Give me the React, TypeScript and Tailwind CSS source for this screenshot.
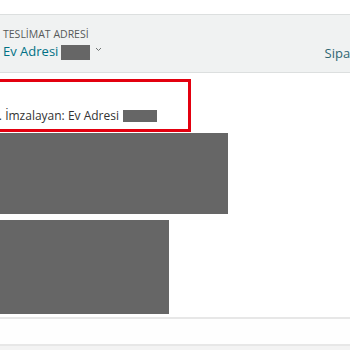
import React from "react";

export default function App() {
  return (
    <div className="w-[350px] h-[350px] overflow-hidden bg-white text-[#0f1111]" style={{ fontFamily: "'Open Sans', 'Noto Sans', sans-serif" }}>
      <div className="h-[14px]" />
      <div className="h-[59px] bg-[#f0f2f2] border-y border-[#dcdfdf] flex items-start justify-between overflow-hidden">
        <div className="pl-[3px] pt-[12px]">
          <div className="text-[10.5px] leading-[14px] text-[#565959]">TESLİMAT ADRESİ</div>
          <div className="flex items-center mt-[1px]">
            <span className="text-[13px] leading-[18px] text-[#007185]">Ev Adresi</span>
            <span className="ml-[3px] w-[29px] h-[15px] bg-[#666666] mt-[2px]" />
            <svg className="ml-[5px] mt-[-4px]" width="7" height="5" viewBox="0 0 7 5">
              <path d="M1 1 L3.5 3.5 L6 1" fill="none" stroke="#6f7373" strokeWidth="1" />
            </svg>
          </div>
        </div>
        <div className="pt-[29px] text-[13px] leading-[18px] text-[#2f6672] whitespace-nowrap translate-x-[15px]">Sipariş</div>
      </div>

      <div className="mt-[6px] -ml-[20px] w-[211px] h-[53px] border-[3px] border-[#e3000f] flex items-end justify-end pr-[31px] pb-[5px] overflow-hidden">
        <div className="flex items-center whitespace-nowrap">
          <span className="text-[12px] leading-[16px] text-[#333333]">Teslim edildi. İmzalayan: Ev Adresi</span>
          <span className="ml-[4px] w-[34px] h-[12px] bg-[#666666]" />
        </div>
      </div>

      <div className="mt-[1px] w-[228px] h-[81px] bg-[#666666]" />
      <div className="mt-[6px] w-[169px] h-[94px] bg-[#666666]" />
      <div className="mt-[3px] h-[29px] border-y-2 border-[#e7e7e7] bg-[#fefefe]" />
      <div className="h-[10px] bg-[#f3f3f3]" />
    </div>
  );
}
